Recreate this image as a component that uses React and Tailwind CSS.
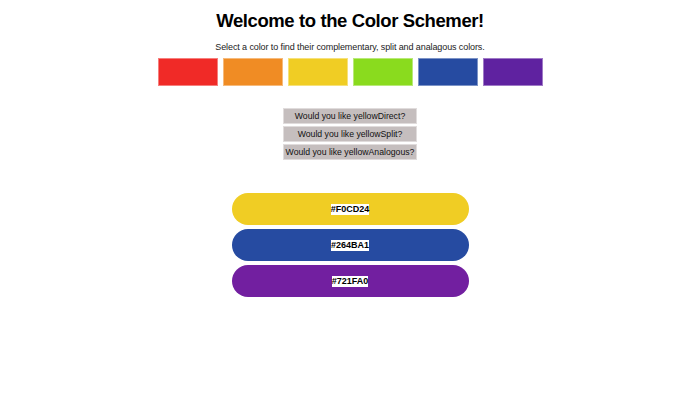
export default function App() {

  const swatches = ["#f02a27", "#f08c24", "#f0cd24", "#8adb1e", "#264ba1", "#5f22a0"];

  const schemes = ["yellowDirect", "yellowSplit", "yellowAnalogous"];

  const results = [
    { hex: "#F0CD24", bg: "bg-[#f0cd24]" },
    { hex: "#264BA1", bg: "bg-[#264ba1]" },
    { hex: "#721FA0", bg: "bg-[#721fa0]" },
  ];

  return (

    <div className="w-[700px] h-[420px] bg-white flex flex-col items-center font-['Liberation_Sans',Arial,sans-serif] text-black">

      <h1 className="mt-[10px] text-[18.5px] tracking-[-0.4px] font-bold leading-[22px]">
        Welcome to the Color Schemer!
      </h1>

      <p className="mt-[9px] text-[9px] tracking-[-0.1px] leading-[12px] text-[#222]">
        Select a color to find their complementary, split and analagous colors.
      </p>

      <div className="mt-[5px] flex gap-[5px]">
        {swatches.map((c) => (
          <div
            key={c}
            className="w-[60px] h-[28px] border border-white/40"
            style={{ backgroundColor: c }}
          />
        ))}
      </div>

      <div className="mt-[22px] flex flex-col items-center gap-[2px]">
        {schemes.map((s) => (
          <button
            key={s}
            className="h-[16px] w-[134px] px-0 whitespace-nowrap bg-[#c5bebe] border border-[#e0dcdc] text-[8.7px] leading-[14px] text-[#111]"
          >
            Would you like {s}?
          </button>
        ))}
      </div>

      <div className="mt-[33px] flex flex-col gap-[4px]">
        {results.map((r) => (
          <div
            key={r.hex}
            className={`w-[237px] h-[32px] rounded-full flex items-center justify-center ${r.bg}`}
          >
            <span className="bg-white text-[9px] font-bold leading-[11px]">{r.hex}</span>
          </div>
        ))}
      </div>

    </div>

  );

}
